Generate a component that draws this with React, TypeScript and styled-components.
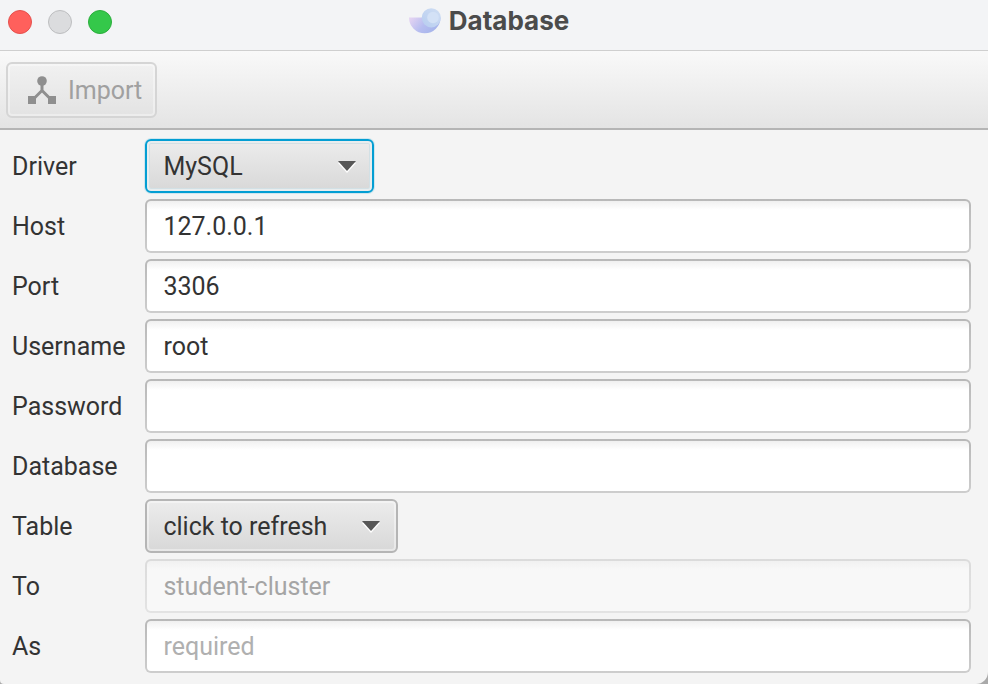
import React from "react";
import styled, { createGlobalStyle, css } from "styled-components";

const GlobalStyle = createGlobalStyle`
  *, *::before, *::after { box-sizing: border-box; }
  html, body, #root { height: 100%; }
  body {
    margin: 0;
    background: #a9a9a9;
    color: #333333;
    font-family: Roboto, "Liberation Sans", sans-serif;
    font-size: 25px;
  }
  button, input, select { font: inherit; color: inherit; }
`;

const Window = styled.main`
  display: flex;
  flex-direction: column;
  min-height: 100%;
  overflow: hidden;
  background: #f4f4f4;
  border-radius: 0 0 12px 4px;
`;

const TitleBar = styled.header`
  display: grid;
  grid-template-columns: 1fr auto 1fr;
  align-items: center;
  height: 51px;
  padding: 0 18px 8px 8px;
  background: #f3f4f6;
  border-bottom: 1px solid #cfcfcf;
`;

const WindowControls = styled.div`
  display: flex;
  gap: 16px;
  padding-top: 2px;
`;

const ControlDot = styled.button<{ $fill: string; $edge: string }>`
  width: 24px;
  height: 24px;
  padding: 0;
  border: 1px solid ${(p) => p.$edge};
  border-radius: 50%;
  background: ${(p) => p.$fill};
`;

const Title = styled.h1`
  display: flex;
  align-items: center;
  gap: 8px;
  margin: 0;
  color: #4b4b4b;
  font-family: Inter, "Liberation Sans", sans-serif;
  font-size: 26px;
  line-height: 32px;
  font-weight: 700;
`;

const ToolBar = styled.div`
  display: flex;
  padding: 11px 6px 10px;
  border-bottom: 2px solid #b5b5b5;
  background: linear-gradient(#f9f9f9, #e4e4e4);
`;

const ImportButton = styled.button`
  display: flex;
  align-items: center;
  gap: 12px;
  height: 56px;
  padding: 0 13px 0 20px;
  border: 2px solid #d5d5d5;
  border-radius: 6px;
  background: linear-gradient(#f1f1f1, #e3e3e3);
  box-shadow: inset 0 0 0 2px rgba(255, 255, 255, 0.35);
  && { color: #a0a0a0; }
`;

const Form = styled.form`
  display: grid;
  grid-template-columns: minmax(113px, max-content) 1fr;
  column-gap: 20px;
  row-gap: 6px;
  align-items: center;
  padding: 9px 17px 11px 12px;
`;

const Label = styled.label`
  padding-top: 2px;
  line-height: 32px;
`;

const TextField = styled.input`
  width: 100%;
  height: 54px;
  padding: 0 16px;
  border: 2px solid transparent;
  border-radius: 6px;
  outline: none;
  background:
    linear-gradient(#f0f0f0, #ffffff 9px) padding-box,
    linear-gradient(#b8b8b8, #cdcdcd) border-box;
  &::placeholder { color: #b0b0b0; opacity: 1; }
  &:disabled {
    color: #a5a5a5;
    background:
      linear-gradient(#f1f1f1, #f8f8f8 9px) padding-box,
      linear-gradient(#dbdbdb, #e3e3e3) border-box;
  }
`;

const SelectBox = styled.div`
  position: relative;
  justify-self: start;
`;

const SelectField = styled.select<{ $active?: boolean }>`
  display: block;
  appearance: none;
  height: 54px;
  min-width: 229px;
  padding: 0 69px 0 16px;
  border: 2px solid #b5b5b5;
  border-radius: 6px;
  outline: none;
  background: linear-gradient(#ececec, #d8d8d8);
  box-shadow: inset 0 0 0 2px rgba(255, 255, 255, 0.4);
  ${(p) =>
    p.$active &&
    css`
      border-color: #039ed3;
      box-shadow: 0 0 0 1px #cfe6ee, inset 0 0 0 2px #e9edee, inset 0 0 0 3px #d2e0e5;
    `}
`;

const Arrow = styled.svg`
  position: absolute;
  top: 22px;
  right: 18px;
  pointer-events: none;
`;

function PlanetLogo() {
  return (
    <svg width="32" height="26" viewBox="0 0 32 26" aria-hidden="true">
      <defs>
        <linearGradient id="bowl" x1="0" y1="0.2" x2="1" y2="0.6">
          <stop offset="0" stopColor="#e3d3f2" />
          <stop offset="0.5" stopColor="#b6bdf0" />
          <stop offset="1" stopColor="#a3b3ea" />
        </linearGradient>
        <linearGradient id="moon" x1="0" y1="1" x2="1" y2="0">
          <stop offset="0" stopColor="#b7cdf0" />
          <stop offset="1" stopColor="#d0def3" />
        </linearGradient>
      </defs>
      <path d="M0 9.5H31.5A15.7 15.7 0 0 1 0 9.5Z" fill="url(#bowl)" />
      <circle cx="22.3" cy="9.8" r="9.6" fill="url(#moon)" />
      <circle cx="24" cy="9.5" r="5.8" fill="#d3e1f6" />
    </svg>
  );
}

function NodesIcon() {
  return (
    <svg width="28" height="28" viewBox="0 0 28 28" fill="#8f8f8f" aria-hidden="true">
      <circle cx="14" cy="5" r="4.8" />
      <path d="M14 8V14.5L4.5 24M14 14.5L23.5 24" fill="none" stroke="#8f8f8f" strokeWidth="3" />
      <path d="M0 20H8V28H0ZM20 20H28V28H20Z" />
    </svg>
  );
}

type DropDownProps = { id: string; option: string; active?: boolean };

function DropDown({ id, option, active }: DropDownProps) {
  return (
    <SelectBox>
      <SelectField id={id} $active={active} defaultValue={option}>
        <option>{option}</option>
      </SelectField>
      <Arrow width="18" height="12" viewBox="0 0 18 12" aria-hidden="true">
        <path d="M0 2H18L9 12Z" fill="#ffffff" />
        <path d="M0 0H18L9 10Z" fill="#575757" />
      </Arrow>
    </SelectBox>
  );
}

export default function App() {
  return (
    <>
      <GlobalStyle />
      <Window>
        <TitleBar>
          <WindowControls>
            <ControlDot type="button" aria-label="Close" $fill="#ff605c" $edge="#e5504d" />
            <ControlDot type="button" aria-label="Minimize" $fill="#dbdcde" $edge="#bdbec0" />
            <ControlDot type="button" aria-label="Zoom" $fill="#34c84a" $edge="#2bae3c" />
          </WindowControls>
          <Title>
            <PlanetLogo />
            Database
          </Title>
        </TitleBar>
        <ToolBar>
          <ImportButton type="button" disabled>
            <NodesIcon />
            Import
          </ImportButton>
        </ToolBar>
        <Form>
          <Label htmlFor="driver">Driver</Label>
          <DropDown id="driver" option="MySQL" active />
          <Label htmlFor="host">Host</Label>
          <TextField id="host" defaultValue="127.0.0.1" />
          <Label htmlFor="port">Port</Label>
          <TextField id="port" defaultValue="3306" />
          <Label htmlFor="username">Username</Label>
          <TextField id="username" defaultValue="root" />
          <Label htmlFor="password">Password</Label>
          <TextField id="password" type="password" />
          <Label htmlFor="database">Database</Label>
          <TextField id="database" />
          <Label htmlFor="table">Table</Label>
          <DropDown id="table" option="click to refresh" />
          <Label htmlFor="to">To</Label>
          <TextField id="to" defaultValue="student-cluster" disabled />
          <Label htmlFor="as">As</Label>
          <TextField id="as" placeholder="required" />
        </Form>
      </Window>
    </>
  );
}
